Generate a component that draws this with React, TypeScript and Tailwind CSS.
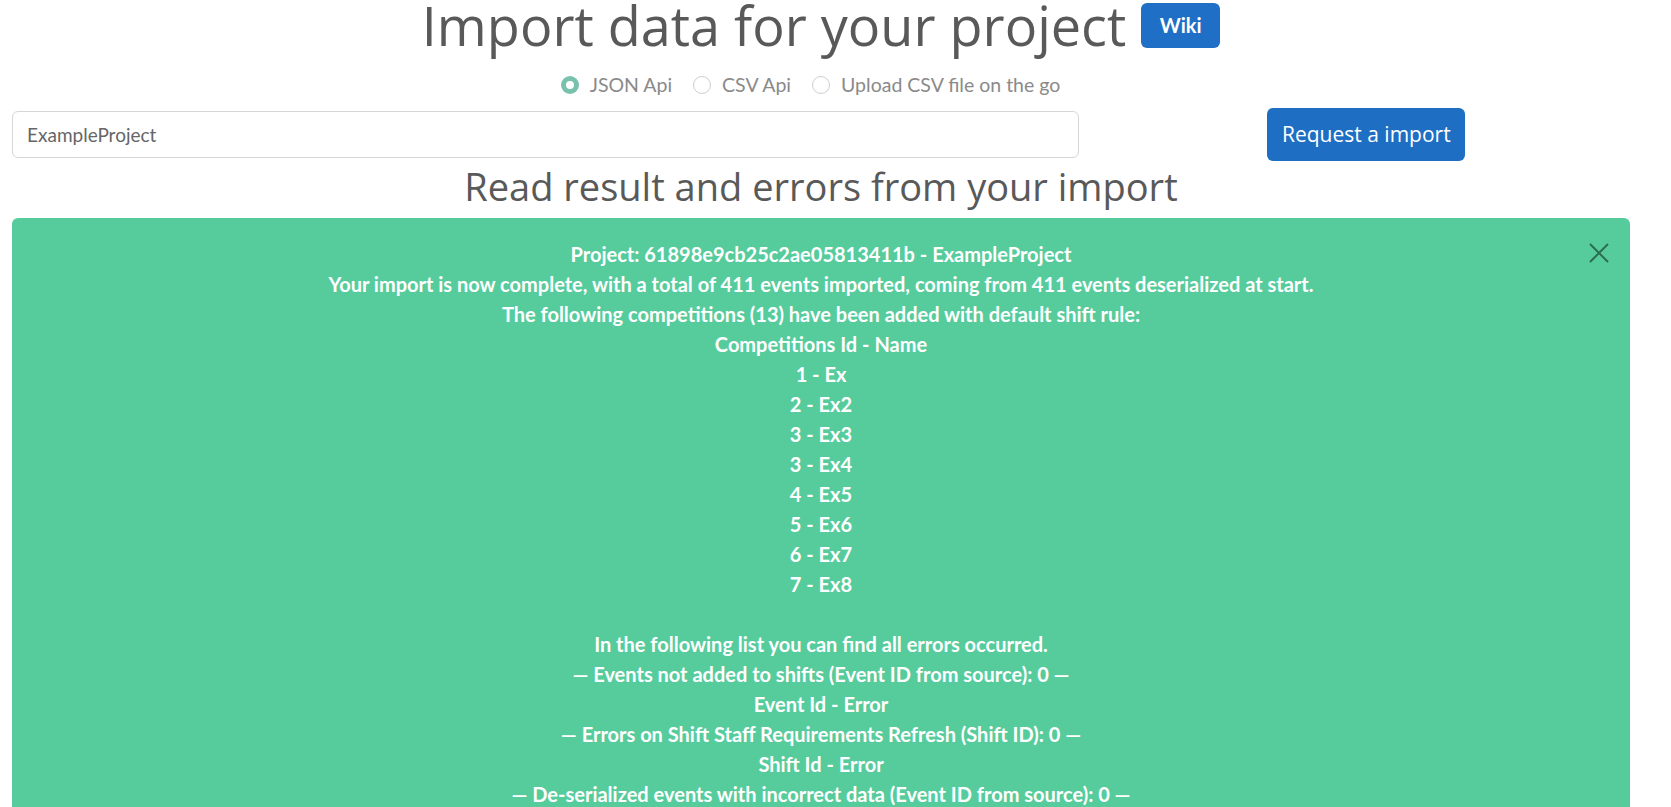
import { useState } from "react";

const competitions = [
  "1 - Ex",
  "2 - Ex2",
  "3 - Ex3",
  "3 - Ex4",
  "4 - Ex5",
  "5 - Ex6",
  "6 - Ex7",
  "7 - Ex8",
];

const errorLines = [
  "In the following list you can find all errors occurred.",
  "— Events not added to shifts (Event ID from source): 0 —",
  "Event Id - Error",
  "— Errors on Shift Staff Requirements Refresh (Shift ID): 0 —",
  "Shift Id - Error",
  "— De-serialized events with incorrect data (Event ID from source): 0 —",
];

const sources = ["JSON Api", "CSV Api", "Upload CSV file on the go"];

export default function App() {
  const [source, setSource] = useState("JSON Api");

  return (
    <main className="min-h-screen w-full bg-white">
      <div className="w-[1642px] px-3">
        <div className="flex items-center justify-center gap-[15px] pt-px">
          <h1 className="font-['Open_Sans',sans-serif] text-[54px] leading-[48px] font-normal text-[#595959]">
            Import data for your project
          </h1>
          <button className="h-[45px] w-[79px] rounded-md bg-[#1e6fc5] font-['Lato',sans-serif] text-[20px] font-bold text-white">
            Wiki
          </button>
        </div>

        <div className="mt-[21px] flex items-center justify-center gap-[21px] pr-[21px] font-['Lato',sans-serif] text-[19.5px] text-[#8a8a8a]">
          {sources.map((s) => (
            <label key={s} className="flex cursor-pointer items-center gap-[11px]">
              <span
                onClick={() => setSource(s)}
                className={
                  s === source
                    ? "flex h-[18px] w-[18px] items-center justify-center rounded-full bg-[#78c2ad]"
                    : "h-[18px] w-[18px] rounded-full border border-[#cfcfcf] bg-white"
                }
              >
                {s === source && <span className="h-[8px] w-[8px] rounded-full bg-white" />}
              </span>
              <span>{s}</span>
            </label>
          ))}
        </div>

        <div className="mt-[9px] flex items-center">
          <div className="w-2/3 pr-3">
            <input
              defaultValue="ExampleProject"
              className="h-[47px] w-full rounded-md border border-[#d6d6d6] pr-4 pl-[14px] font-['Lato',sans-serif] text-[19px] text-[#666] outline-none"
            />
          </div>
          <div className="flex w-1/3 justify-center pl-3">
            <button className="h-[53px] w-[198px] rounded-md bg-[#1e6fc4] font-['Open_Sans',sans-serif] text-[21px] text-white">
              Request a import
            </button>
          </div>
        </div>

        <h2 className="mt-[2px] text-center font-['Open_Sans',sans-serif] text-[38px] leading-[46px] font-normal text-[#595959]">
          Read result and errors from your import
        </h2>

        <div className="relative mt-[9px] rounded-md bg-[#56cc9d] px-5 pt-[21px] pb-6 text-center font-['Lato',sans-serif] text-[20px] leading-[30px] font-bold text-white">
          <button className="absolute top-[25px] right-[21px] text-[#2c6d51]">
            <svg width="20" height="20" viewBox="0 0 20 20" fill="none" stroke="currentColor" strokeWidth="2">
              <path d="M1 1L19 19M19 1L1 19" />
            </svg>
          </button>
          <p>Project: 61898e9cb25c2ae05813411b - ExampleProject</p>
          <p>
            Your import is now complete, with a total of 411 events imported, coming from 411 events deserialized at
            start.
          </p>
          <p>The following competitions (13) have been added with default shift rule:</p>
          <p>Competitions Id - Name</p>
          {competitions.map((c) => (
            <p key={c}>{c}</p>
          ))}
          <p>&nbsp;</p>
          {errorLines.map((l) => (
            <p key={l}>{l}</p>
          ))}
        </div>
      </div>
    </main>
  );
}
